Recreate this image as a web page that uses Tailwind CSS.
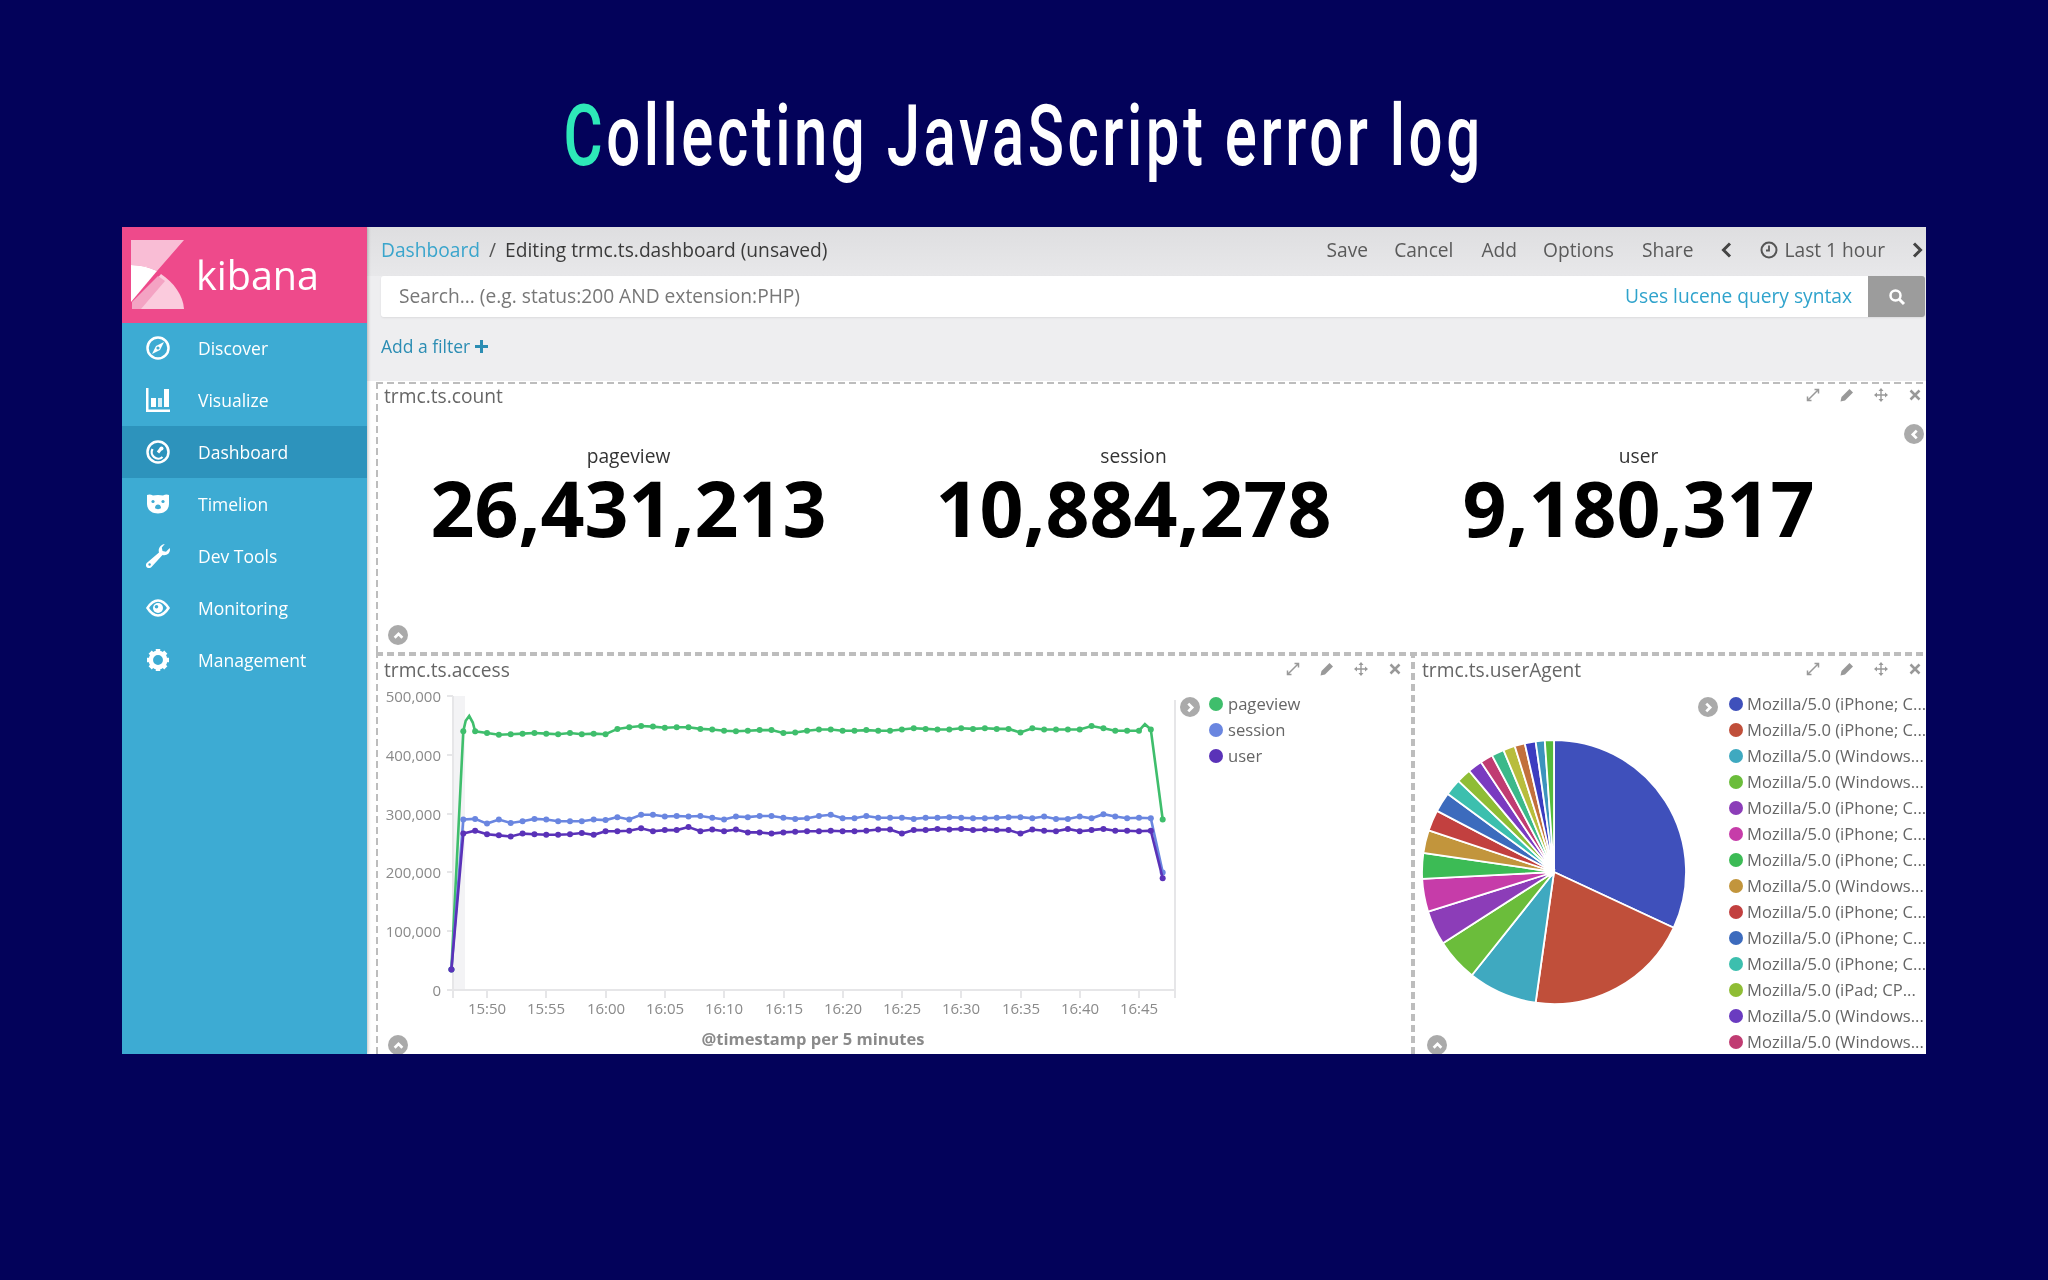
<!DOCTYPE html>
<html>
<head>
<meta charset="utf-8">
<script src="https://cdn.jsdelivr.net/npm/@tailwindcss/browser@4"></script>
</head>
<body class="m-0 w-[2048px] h-[1280px] overflow-hidden bg-[#03025a] font-['Open_Sans',sans-serif]">
<header class="h-[227px] flex justify-center pt-[86px]">
  <h1 class="m-0 h-[100px] font-['Roboto',sans-serif] text-[85px] leading-[100px] font-medium tracking-[5px] text-white whitespace-nowrap scale-x-[0.705] blur-[0.5px]"><span class="text-[#2ee8b8]">C</span>ollecting JavaScript error log</h1>
</header>
<div class="ml-[122px] w-[1804px] h-[827px] flex overflow-hidden bg-white blur-[0.4px]">
  <aside class="w-[245px] shrink-0 flex flex-col bg-[#3dabd3] text-white z-10 shadow-[1px_0_3px_rgba(0,0,0,.25)]">
    <div class="h-[96px] bg-[#ee4a8b] flex items-center pl-[9px] gap-[12px]">
      <svg width="53" height="69" viewBox="0 0 53 69" class="mb-[2px]">
        <path d="M0 0H53L26 31C18 27 9 25 0 25Z" fill="#f9bdd5"/>
        <path d="M0 25C9 25 18 27 26 31L0 62Z" fill="#fff"/>
        <path d="M1 69L30 34C43 43 52 55 53 69Z" fill="#fbcbdd"/>
        <path d="M1 69V62L27 36L34 41L10 69Z" fill="#f4a3c3"/>
      </svg>
      <span class="text-[39.5px] leading-none font-medium mt-[1px]">kibana</span>
    </div>
    <nav class="flex flex-col text-[17.5px] font-medium -mt-[1px]">
      <a class="h-[52px] flex items-center gap-[28px] pl-[24px]">
        <svg width="24" height="24" viewBox="0 0 24 24" fill="none"><circle cx="12" cy="12" r="10.500" stroke="#fff" stroke-width="2.500"/><path d="M18 6L14 14L6 18L10 10Z" fill="#fff"/><circle cx="12" cy="12" r="1.600" fill="#3dabd3"/></svg>
        <span>Discover</span>
      </a>
      <a class="h-[52px] flex items-center gap-[28px] pl-[24px]">
        <svg width="24" height="24" viewBox="0 0 24 24" fill="#fff"><path d="M0 0H2.500V21.500H25V24H0Z"/><rect x="5" y="10" width="5" height="9"/><rect x="12" y="10" width="4" height="9" opacity=".8"/><rect x="18" y="1" width="5" height="18"/></svg>
        <span>Visualize</span>
      </a>
      <a class="h-[52px] flex items-center gap-[28px] pl-[24px] bg-[#2d93bc]">
        <svg width="24" height="24" viewBox="0 0 24 24" fill="none"><circle cx="12" cy="12" r="10.500" stroke="#fff" stroke-width="2.500"/><path d="M6.500 9A6.500 6.500 0 0 0 16.500 17" stroke="#fff" stroke-width="2.300"/><path d="M12 12.500L15.500 8" stroke="#fff" stroke-width="3"/><circle cx="15.500" cy="8.500" r="2" fill="#fff"/></svg>
        <span>Dashboard</span>
      </a>
      <a class="h-[52px] flex items-center gap-[28px] pl-[24px]">
        <svg width="24" height="24" viewBox="0 0 24 24"><path d="M1 3C3 2 5 2.500 7 3.500C10 2.800 14 2.800 17 3.500C19 2.500 21 2 23 3V12C23 18 18 21.500 12 21.500C6 21.500 1 18 1 12Z" fill="#fff"/><circle cx="7" cy="9.500" r="1.600" fill="#3dabd3"/><circle cx="17" cy="9.500" r="1.600" fill="#3dabd3"/><path d="M9 16C9 13.500 10.500 12.500 12 12.500C13.500 12.500 15 13.500 15 16C14 17.500 10 17.500 9 16Z" fill="#3dabd3"/></svg>
        <span>Timelion</span>
      </a>
      <a class="h-[52px] flex items-center gap-[28px] pl-[24px]">
        <svg width="24" height="24" viewBox="0 0 24 24" fill="#fff"><path d="M24 5.500C24 9.500 20.500 12 16.500 11L5.500 23C4 24.500 1.800 24.300 .7 23.200C-.4 22 -.3 20 1 18.800L13 8.500C11.800 4.500 14.500 .5 18.800 0L15.800 3.500L16.500 7L20 7.800L23.700 4Z"/><circle cx="3.600" cy="20.500" r="1.200" fill="#3dabd3"/></svg>
        <span>Dev Tools</span>
      </a>
      <a class="h-[52px] flex items-center gap-[28px] pl-[24px]">
        <svg width="24" height="24" viewBox="0 0 24 24" fill="none"><path d="M1.500 12C5 6.500 8.500 4.500 12 4.500C15.500 4.500 19 6.500 22.500 12C19 17.500 15.500 19.500 12 19.500C8.500 19.500 5 17.500 1.500 12Z" stroke="#fff" stroke-width="2.500"/><circle cx="12" cy="12" r="5" fill="#fff"/><circle cx="10.500" cy="10.800" r="1.800" fill="#3dabd3"/></svg>
        <span>Monitoring</span>
      </a>
      <a class="h-[52px] flex items-center gap-[28px] pl-[24px]">
        <svg width="24" height="24" viewBox="0 0 24 24" fill="none"><circle cx="12" cy="12" r="7.200" stroke="#fff" stroke-width="4.500"/><path d="M12 1V5M12 19V23M1 12H5M19 12H23M4.200 4.200L7 7M17 17L19.800 19.800M19.800 4.200L17 7M7 17L4.200 19.800" stroke="#fff" stroke-width="4.500"/></svg>
        <span>Management</span>
      </a>
    </nav>
  </aside>
  <main class="flex-1 min-w-0 flex flex-col text-[#555]">
    <div class="h-[49px] bg-gradient-to-b from-[#dedee0] to-[#e8e8ea] flex items-center pl-[14px] pb-[2px] text-[19.2px]">
      <span class="text-[#3aa5cc]">Dashboard</span>
      <span class="mx-[9px] text-[#555]">/</span>
      <span class="text-[#3a3a3a]">Editing trmc.ts.dashboard (unsaved)</span>
      <div class="ml-auto flex items-center text-[#5a5a5a]">
        <span>Save</span>
        <span class="ml-[26px]">Cancel</span>
        <span class="ml-[28px]">Add</span>
        <span class="ml-[26px]">Options</span>
        <span class="ml-[28px]">Share</span>
        <svg class="ml-[27px]" width="12" height="18" viewBox="0 0 12 18" fill="none"><path d="M10 2.500L3.500 9L10 15.500" stroke="#444" stroke-width="3"/></svg>
        <svg class="ml-[28px]" width="18" height="18" viewBox="0 0 18 18" fill="none"><circle cx="9" cy="9" r="7.500" stroke="#555" stroke-width="2"/><path d="M9 4.500V9.500H6" stroke="#555" stroke-width="1.800"/></svg>
        <span class="ml-[6px]">Last 1 hour</span>
        <svg class="ml-[27px] mr-[2px]" width="12" height="18" viewBox="0 0 12 18" fill="none"><path d="M2 2.500L8.500 9L2 15.500" stroke="#444" stroke-width="3"/></svg>
      </div>
    </div>
    <div class="bg-[#eeeef0] pl-[14px] pr-[1px]">
      <div class="h-[41px] flex shadow-[0_1px_2px_rgba(0,0,0,.08)] rounded-[3px]">
        <div class="flex-1 bg-white rounded-l-[3px] flex items-center pl-[18px] pr-[16px] text-[19.2px]">
          <span class="text-[#777]">Search... (e.g. status:200 AND extension:PHP)</span>
          <span class="ml-auto text-[#2fa3cc]">Uses lucene query syntax</span>
        </div>
        <div class="w-[57px] bg-[#9c9c9c] rounded-r-[3px] flex items-center justify-center">
          <svg width="18" height="18" viewBox="0 0 18 18" fill="none"><circle cx="7.500" cy="7.500" r="5" stroke="#fff" stroke-width="2.500"/><path d="M11.500 11.500L16 16" stroke="#fff" stroke-width="3"/></svg>
        </div>
      </div>
      <div class="h-[64px] flex items-center text-[17.5px] text-[#2b8db3] gap-[5px] pb-[5px]">
        <span>Add a filter</span>
        <svg width="13" height="13" viewBox="0 0 13 13"><path d="M5 0H8V5H13V8H8V13H5V8H0V5H5Z" fill="#2b8db3"/></svg>
      </div>
    </div>

    <!-- count panel -->
    <section class="relative h-[272px] ml-[9px] shrink-0">
      <div class="absolute left-0 right-0 top-[1px] h-[2px] bg-[repeating-linear-gradient(90deg,#bdbdbd_0_7px,transparent_7px_11px)]"></div>
      <div class="absolute left-0 top-[1px] bottom-0 w-[2px] bg-[repeating-linear-gradient(0deg,#bdbdbd_0_7px,transparent_7px_11px)]"></div>
      <div class="pl-[8px] pt-[3px] text-[19.2px] leading-[24px] text-[#666]">trmc.ts.count</div>
      <div class="absolute top-[7px] right-[4px] flex items-center gap-[20px]">
        <svg width="14" height="14" viewBox="0 0 14 14" fill="none" stroke="#999" stroke-width="1.500"><path d="M2 12L12 2M8.500 1.500H12.500V5.500M1.500 8.500V12.500H5.500"/></svg>
        <svg width="14" height="14" viewBox="0 0 14 14" fill="#999"><path d="M.5 13.500L1.500 9L9.500 1L13 4.500L5 12.500Z"/></svg>
        <svg width="14" height="14" viewBox="0 0 14 14" fill="#999"><path d="M7 0L9.500 3H7.700V6.300H11V4.500L14 7L11 9.500V7.700H7.700V11H9.500L7 14L4.500 11H6.300V7.700H3V9.500L0 7L3 4.500V6.300H6.300V3H4.500Z"/></svg>
        <svg width="14" height="14" viewBox="0 0 14 14" fill="none" stroke="#999" stroke-width="2.500"><path d="M2.500 2.500L11.500 11.500M11.500 2.500L2.500 11.500"/></svg>
      </div>
      <div class="flex mt-[36px]">
        <div class="w-[505px] flex flex-col items-center"><span class="text-[19.2px] leading-[24px] text-[#333]">pageview</span><span class="text-[77px] leading-[56px] font-bold text-black mt-[12px]">26,431,213</span></div>
        <div class="w-[505px] flex flex-col items-center"><span class="text-[19.2px] leading-[24px] text-[#333]">session</span><span class="text-[77px] leading-[56px] font-bold text-black mt-[12px]">10,884,278</span></div>
        <div class="w-[505px] flex flex-col items-center"><span class="text-[19.2px] leading-[24px] text-[#333]">user</span><span class="text-[77px] leading-[56px] font-bold text-black mt-[12px]">9,180,317</span></div>
      </div>
      <div class="absolute left-[12px] top-[244px] w-[20px] h-[20px] rounded-full bg-[#aaa] flex items-center justify-center"><svg width="11" height="11" viewBox="0 0 10 10" fill="none"><path d="M1.500 7L5 3.500L8.500 7" stroke="#fff" stroke-width="2.500"/></svg></div>
      <div class="absolute right-[2px] top-[43px] w-[20px] h-[20px] rounded-full bg-[#aaa] flex items-center justify-center"><svg width="11" height="11" viewBox="0 0 10 10" fill="none"><path d="M7 1.500L3.500 5L7 8.500" stroke="#fff" stroke-width="2.500"/></svg></div>
    </section>

    <!-- second row -->
    <div class="relative flex-1 min-h-0 ml-[9px] flex">
      <div class="absolute left-0 right-0 -top-[1px] h-[4px] bg-[repeating-linear-gradient(90deg,#bdbdbd_0_7px,transparent_7px_11px)] z-10"></div>
      <!-- access panel -->
      <section class="relative w-[1036px] shrink-0">
        <div class="absolute left-0 top-0 bottom-0 w-[2px] bg-[repeating-linear-gradient(0deg,#bdbdbd_0_7px,transparent_7px_11px)]"></div>
        <div class="absolute -right-[3px] top-0 bottom-0 w-[4px] bg-[repeating-linear-gradient(0deg,#bdbdbd_0_7px,transparent_7px_11px)]"></div>
        <div class="absolute left-[8px] top-[5px] text-[19.2px] leading-[24px] text-[#666]">trmc.ts.access</div>
        <div class="absolute top-[9px] right-[10px] flex items-center gap-[20px]">
          <svg width="14" height="14" viewBox="0 0 14 14" fill="none" stroke="#999" stroke-width="1.500"><path d="M2 12L12 2M8.500 1.500H12.500V5.500M1.500 8.500V12.500H5.500"/></svg>
          <svg width="14" height="14" viewBox="0 0 14 14" fill="#999"><path d="M.5 13.500L1.500 9L9.500 1L13 4.500L5 12.500Z"/></svg>
          <svg width="14" height="14" viewBox="0 0 14 14" fill="#999"><path d="M7 0L9.500 3H7.700V6.300H11V4.500L14 7L11 9.500V7.700H7.700V11H9.500L7 14L4.500 11H6.300V7.700H3V9.500L0 7L3 4.500V6.300H6.300V3H4.500Z"/></svg>
          <svg width="14" height="14" viewBox="0 0 14 14" fill="none" stroke="#999" stroke-width="2.500"><path d="M2.500 2.500L11.500 11.500M11.500 2.500L2.500 11.500"/></svg>
        </div>
        <svg id="chart" width="1036" height="401" viewBox="376 653 1036 401" class="block font-['Open_Sans',sans-serif]">
          <rect x="453" y="696" width="12" height="294" fill="#f3f3f5"/>
          <g stroke="#e6e6e8" stroke-width="2" fill="none">
            <path d="M453 696V998M453 990H1175M1175 700V998M447 696H453M447 755H453M447 814H453M447 872H453M447 931H453M447 990H453M487 990V998M546 990V998M606 990V998M665 990V998M724 990V998M784 990V998M843 990V998M902 990V998M961 990V998M1021 990V998M1080 990V998M1139 990V998"/>
          </g>
          <g font-size="15" fill="#8a8a8a" text-anchor="end">
            <text x="441" y="702">500,000</text><text x="441" y="761">400,000</text><text x="441" y="820">300,000</text><text x="441" y="878">200,000</text><text x="441" y="937">100,000</text><text x="441" y="996">0</text>
          </g>
          <g font-size="15" fill="#8a8a8a" text-anchor="middle">
            <text x="487" y="1014">15:50</text><text x="546" y="1014">15:55</text><text x="606" y="1014">16:00</text><text x="665" y="1014">16:05</text><text x="724" y="1014">16:10</text><text x="784" y="1014">16:15</text><text x="843" y="1014">16:20</text><text x="902" y="1014">16:25</text><text x="961" y="1014">16:30</text><text x="1021" y="1014">16:35</text><text x="1080" y="1014">16:40</text><text x="1139" y="1014">16:45</text>
          </g>
          <text x="813" y="1045" font-size="16.500" font-weight="700" fill="#8a8a8a" text-anchor="middle">@timestamp per 5 minutes</text>
        </svg>
        <div class="absolute left-[804px] top-[44px] w-[20px] h-[20px] rounded-full bg-[#aaa] flex items-center justify-center"><svg width="11" height="11" viewBox="0 0 10 10" fill="none"><path d="M3 1.500L6.500 5L3 8.500" stroke="#fff" stroke-width="2.500"/></svg></div>
        <ul class="absolute left-[833px] top-[38px] text-[16.6px] text-[#666] flex flex-col">
          <li class="h-[26px] flex items-center gap-[5px]"><i class="w-[14px] h-[14px] rounded-full bg-[#3fbe6c]"></i>pageview</li>
          <li class="h-[26px] flex items-center gap-[5px]"><i class="w-[14px] h-[14px] rounded-full bg-[#6a86e0]"></i>session</li>
          <li class="h-[26px] flex items-center gap-[5px]"><i class="w-[14px] h-[14px] rounded-full bg-[#5a32b8]"></i>user</li>
        </ul>
        <div class="absolute left-[12px] top-[382px] w-[20px] h-[20px] rounded-full bg-[#aaa] flex items-center justify-center"><svg width="11" height="11" viewBox="0 0 10 10" fill="none"><path d="M1.500 7L5 3.500L8.500 7" stroke="#fff" stroke-width="2.500"/></svg></div>
      </section>
      <!-- userAgent panel -->
      <section class="relative flex-1 min-w-0">
        <div class="absolute left-[10px] top-[5px] text-[19.2px] leading-[24px] text-[#666]">trmc.ts.userAgent</div>
        <div class="absolute top-[9px] right-[4px] flex items-center gap-[20px]">
          <svg width="14" height="14" viewBox="0 0 14 14" fill="none" stroke="#999" stroke-width="1.500"><path d="M2 12L12 2M8.500 1.500H12.500V5.500M1.500 8.500V12.500H5.500"/></svg>
          <svg width="14" height="14" viewBox="0 0 14 14" fill="#999"><path d="M.5 13.500L1.500 9L9.500 1L13 4.500L5 12.500Z"/></svg>
          <svg width="14" height="14" viewBox="0 0 14 14" fill="#999"><path d="M7 0L9.500 3H7.700V6.300H11V4.500L14 7L11 9.500V7.700H7.700V11H9.500L7 14L4.500 11H6.300V7.700H3V9.500L0 7L3 4.500V6.300H6.300V3H4.500Z"/></svg>
          <svg width="14" height="14" viewBox="0 0 14 14" fill="none" stroke="#999" stroke-width="2.500"><path d="M2.500 2.500L11.500 11.500M11.500 2.500L2.500 11.500"/></svg>
        </div>
        <svg id="pie" width="274" height="274" viewBox="-137 -137 274 274" class="absolute left-[5px] top-[82px]"></svg>
        <div class="absolute left-[286px] top-[44px] w-[20px] h-[20px] rounded-full bg-[#aaa] flex items-center justify-center"><svg width="11" height="11" viewBox="0 0 10 10" fill="none"><path d="M3 1.500L6.500 5L3 8.500" stroke="#fff" stroke-width="2.500"/></svg></div>
        <ul class="absolute left-[317px] top-[38px] text-[16.6px] text-[#666] flex flex-col whitespace-nowrap">
          <li class="h-[26px] flex items-center gap-[4px]"><i class="w-[14px] h-[14px] rounded-full bg-[#3f50bb]"></i>Mozilla/5.0 (iPhone; C...</li>
          <li class="h-[26px] flex items-center gap-[4px]"><i class="w-[14px] h-[14px] rounded-full bg-[#c04f3a]"></i>Mozilla/5.0 (iPhone; C...</li>
          <li class="h-[26px] flex items-center gap-[4px]"><i class="w-[14px] h-[14px] rounded-full bg-[#3fa9c0]"></i>Mozilla/5.0 (Windows...</li>
          <li class="h-[26px] flex items-center gap-[4px]"><i class="w-[14px] h-[14px] rounded-full bg-[#6bbd3b]"></i>Mozilla/5.0 (Windows...</li>
          <li class="h-[26px] flex items-center gap-[4px]"><i class="w-[14px] h-[14px] rounded-full bg-[#8c3db8]"></i>Mozilla/5.0 (iPhone; C...</li>
          <li class="h-[26px] flex items-center gap-[4px]"><i class="w-[14px] h-[14px] rounded-full bg-[#c63ca9]"></i>Mozilla/5.0 (iPhone; C...</li>
          <li class="h-[26px] flex items-center gap-[4px]"><i class="w-[14px] h-[14px] rounded-full bg-[#3cbb55]"></i>Mozilla/5.0 (iPhone; C...</li>
          <li class="h-[26px] flex items-center gap-[4px]"><i class="w-[14px] h-[14px] rounded-full bg-[#c2953c]"></i>Mozilla/5.0 (Windows...</li>
          <li class="h-[26px] flex items-center gap-[4px]"><i class="w-[14px] h-[14px] rounded-full bg-[#c2403f]"></i>Mozilla/5.0 (iPhone; C...</li>
          <li class="h-[26px] flex items-center gap-[4px]"><i class="w-[14px] h-[14px] rounded-full bg-[#3c6bbd]"></i>Mozilla/5.0 (iPhone; C...</li>
          <li class="h-[26px] flex items-center gap-[4px]"><i class="w-[14px] h-[14px] rounded-full bg-[#3cbfae]"></i>Mozilla/5.0 (iPhone; C...</li>
          <li class="h-[26px] flex items-center gap-[4px]"><i class="w-[14px] h-[14px] rounded-full bg-[#8fbd35]"></i>Mozilla/5.0 (iPad; CP...</li>
          <li class="h-[26px] flex items-center gap-[4px]"><i class="w-[14px] h-[14px] rounded-full bg-[#6a3bc0]"></i>Mozilla/5.0 (Windows...</li>
          <li class="h-[26px] flex items-center gap-[4px]"><i class="w-[14px] h-[14px] rounded-full bg-[#c03c72]"></i>Mozilla/5.0 (Windows...</li>
        </ul>
        <div class="absolute left-[15px] top-[382px] w-[20px] h-[20px] rounded-full bg-[#aaa] flex items-center justify-center"><svg width="11" height="11" viewBox="0 0 10 10" fill="none"><path d="M1.500 7L5 3.500L8.500 7" stroke="#fff" stroke-width="2.500"/></svg></div>
      </section>
    </div>
  </main>
</div>
<script>
const NS='http://www.w3.org/2000/svg';
const chart=document.getElementById('chart');
const X=i=>487+(i-3)*11.854, Y=v=>990-v*0.588;
const series=[
 ['#3fbe6c',[35,440,440,437,434,435,436,437,436,435,437,435,436,435,444,447,449,448,446,447,447,444,443,441,440,441,442,442,437,438,441,443,443,441,441,442,441,441,443,445,444,443,443,445,444,445,444,444,438,445,443,443,443,443,449,445,441,441,441,443,290],[[1.2,458],[1.5,466],[1.8,455],[58.5,452]]],
 ['#6a86e0',[35,290,291,283,290,284,287,291,290,287,287,287,290,289,294,290,298,298,295,296,295,296,293,290,295,294,296,296,293,291,292,296,298,292,292,296,293,293,293,291,293,293,294,293,292,292,293,294,294,292,295,291,291,295,292,299,295,292,293,292,200],[]],
 ['#5a32b8',[35,266,271,265,263,261,266,265,264,264,265,267,264,270,270,271,275,270,272,272,277,270,273,270,273,268,268,266,268,269,270,270,271,270,270,271,273,273,266,272,272,274,273,274,272,273,272,272,266,273,271,270,274,270,272,274,271,271,270,271,190],[]]
];
series.forEach(([c,d,extra])=>{
  const pts=d.map((v,i)=>[i,v]).concat(extra).sort((a,b)=>a[0]-b[0]);
  const l=document.createElementNS(NS,'polyline');
  l.setAttribute('points',pts.map(p=>X(p[0]).toFixed(1)+','+Y(p[1]).toFixed(1)).join(' '));
  l.setAttribute('fill','none');l.setAttribute('stroke',c);l.setAttribute('stroke-width','2.600');
  chart.appendChild(l);
  d.forEach((v,i)=>{const m=document.createElementNS(NS,'circle');m.setAttribute('cx',X(i));m.setAttribute('cy',Y(v));m.setAttribute('r','3');m.setAttribute('fill',c);chart.appendChild(m);});
});
const pie=document.getElementById('pie');
const slices=[[115,'#3f50bb'],[188,'#c04f3a'],[218.5,'#3fa9c0'],[237.3,'#6bbd3b'],[252.5,'#8c3db8'],[267,'#c63ca9'],[278.3,'#3cbb55'],[288.4,'#c2953c'],[297.6,'#c2403f'],[306.3,'#3c6bbd'],[313.6,'#3cbfae'],[320,'#8fbd35'],[326.4,'#7a3bc0'],[332,'#c03c72'],[337.5,'#3cb98a'],[342.7,'#b8bd3c'],[347.2,'#c2703c'],[352,'#3c3cc0'],[356,'#3c93bd'],[360,'#55bb3c']];
let a0=0;
slices.forEach(([a1,c])=>{
  const p=a=>{const r=a*Math.PI/180;return (132*Math.sin(r)).toFixed(2)+' '+(-132*Math.cos(r)).toFixed(2)};
  const s=document.createElementNS(NS,'path');
  s.setAttribute('d','M0 0L'+p(a0)+'A132 132 0 '+(a1-a0>180?1:0)+' 1 '+p(a1)+'Z');
  s.setAttribute('fill',c);s.setAttribute('stroke','#fff');s.setAttribute('stroke-width','1.800');
  pie.appendChild(s);a0=a1;
});
const hole=document.createElementNS(NS,'circle');hole.setAttribute('r','5');hole.setAttribute('cx','-4');hole.setAttribute('fill','#fff');pie.appendChild(hole);
</script>
</body>
</html>
